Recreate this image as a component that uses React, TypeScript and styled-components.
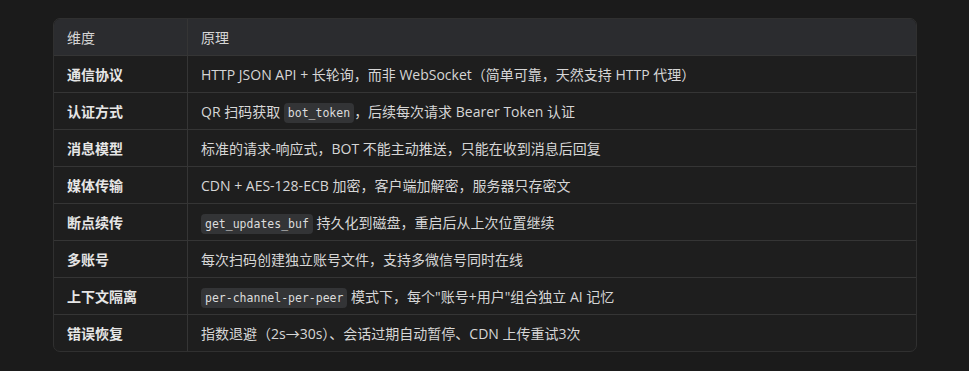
import styled, { createGlobalStyle } from "styled-components";

const GlobalStyle = createGlobalStyle`
  body {
    margin: 0;
    background: #1b1b1b;
    font-family: "Segoe UI", "Open Sans", "Noto Sans CJK SC", sans-serif;
  }
`;

const Page = styled.div`
  padding: 18px 52px 0 53px;
`;

const TableWrap = styled.div`
  border: 1px solid #303030;
  border-radius: 7px;
  overflow: hidden;
  background: #1e1e1e;
`;

const Table = styled.table`
  width: 100%;
  border-collapse: collapse;
  font-size: 14px;
  color: #d6d6d6;
`;

const HeadCell = styled.th`
  background: #2b2c2f;
  text-align: left;
  font-weight: normal;
  height: 36px;
  padding: 0 13px;
  border-bottom: 1px solid #353535;
  &:first-child {
    width: 107px;
    border-right: 1px solid #353535;
  }
`;

const Row = styled.tr`
  & + & td {
    border-top: 1px solid #353535;
  }
`;

const Cell = styled.td<{ $bold?: boolean }>`
  height: 36px;
  padding: 0 13px;
  font-weight: ${(p) => (p.$bold ? 700 : 400)};
  color: ${(p) => (p.$bold ? "#e6e6e6" : "#d6d6d6")};
  &:first-child {
    border-right: 1px solid #353535;
  }
`;

const Code = styled.code`
  font-family: "DejaVu Sans Mono", "Liberation Mono", monospace;
  font-size: 11.5px;
  background: #333436;
  color: #dcdcdc;
  border-radius: 4px;
  padding: 3px 4px;
`;

const rows: { key: string; body: React.ReactNode }[] = [
  { key: "通信协议", body: "HTTP JSON API + 长轮询，而非 WebSocket（简单可靠，天然支持 HTTP 代理）" },
  { key: "认证方式", body: <>QR 扫码获取 <Code>bot_token</Code>，后续每次请求 Bearer Token 认证</> },
  { key: "消息模型", body: "标准的请求-响应式，BOT 不能主动推送，只能在收到消息后回复" },
  { key: "媒体传输", body: "CDN + AES-128-ECB 加密，客户端加解密，服务器只存密文" },
  { key: "断点续传", body: <><Code>get_updates_buf</Code> 持久化到磁盘，重启后从上次位置继续</> },
  { key: "多账号", body: "每次扫码创建独立账号文件，支持多微信号同时在线" },
  { key: "上下文隔离", body: <><Code>per-channel-per-peer</Code> 模式下，每个"账号+用户"组合独立 AI 记忆</> },
  { key: "错误恢复", body: "指数退避（2s→30s）、会话过期自动暂停、CDN 上传重试3次" },
];

export default function App() {
  return (
    <>
      <GlobalStyle />
      <Page>
        <TableWrap>
          <Table>
            <thead>
              <tr>
                <HeadCell>维度</HeadCell>
                <HeadCell>原理</HeadCell>
              </tr>
            </thead>
            <tbody>
              {rows.map((r) => (
                <Row key={r.key}>
                  <Cell $bold>{r.key}</Cell>
                  <Cell>{r.body}</Cell>
                </Row>
              ))}
            </tbody>
          </Table>
        </TableWrap>
      </Page>
    </>
  );
}
